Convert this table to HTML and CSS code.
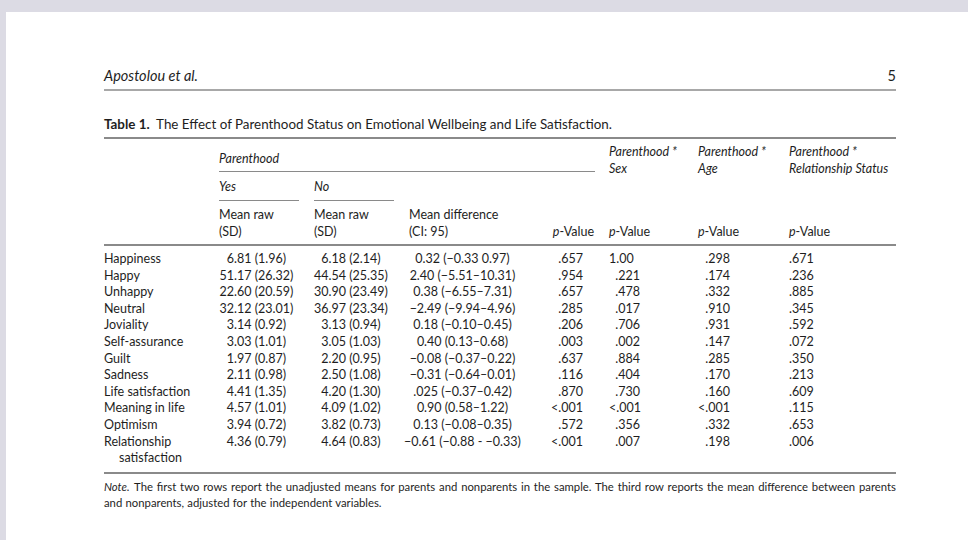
FILE: index.html
```html
<!DOCTYPE html>
<html>
<head>
<meta charset="utf-8">
<link rel="stylesheet" href="styles.css">
</head>
<body>
<div class="page">
  <header class="running">
    <span class="authors">Apostolou et al.</span>
    <span class="folio">5</span>
  </header>
  <div class="caption"><b>Table 1.</b>&nbsp; The Effect of Parenthood Status on Emotional Wellbeing and Life Satisfaction.</div>
  <table class="tbl">
    <colgroup>
      <col class="c1"><col class="c2"><col class="c3"><col class="c4"><col class="c5"><col class="c6"><col class="c7"><col class="c8">
    </colgroup>
    <thead>
      <tr class="h1">
        <th></th>
        <th colspan="4" class="grp"><div class="rule-under w376"><i>Parenthood</i></div></th>
        <th rowspan="2" class="inter"><i>Parenthood *<br>Sex</i></th>
        <th rowspan="2" class="inter"><i>Parenthood *<br>Age</i></th>
        <th rowspan="2" class="inter"><i>Parenthood *<br>Relationship Status</i></th>
      </tr>
      <tr class="h2">
        <th></th>
        <th class="grp"><div class="rule-under w80"><i>Yes</i></div></th>
        <th class="grp"><div class="rule-under w80"><i>No</i></div></th>
        <th></th>
        <th></th>
      </tr>
      <tr class="h3">
        <th></th>
        <th>Mean raw<br>(SD)</th>
        <th>Mean raw<br>(SD)</th>
        <th class="md">Mean difference<br>(CI: 95)</th>
        <th class="pv"><i>p</i>-Value</th>
        <th><i>p</i>-Value</th>
        <th><i>p</i>-Value</th>
        <th><i>p</i>-Value</th>
      </tr>
    </thead>
    <tbody>
      <tr class="first"><td class="lab">Happiness</td><td class="yes">6.81 (1.96)</td><td class="no">6.18 (2.14)</td><td class="dif">0.32 (−0.33 0.97)</td><td class="d5">.657</td><td class="d6 one">1.00</td><td class="d7">.298</td><td class="d8">.671</td></tr>
      <tr><td class="lab">Happy</td><td class="yes">51.17 (26.32)</td><td class="no">44.54 (25.35)</td><td class="dif">2.40 (−5.51–10.31)</td><td class="d5">.954</td><td class="d6">.221</td><td class="d7">.174</td><td class="d8">.236</td></tr>
      <tr><td class="lab">Unhappy</td><td class="yes">22.60 (20.59)</td><td class="no">30.90 (23.49)</td><td class="dif">0.38 (−6.55–7.31)</td><td class="d5">.657</td><td class="d6">.478</td><td class="d7">.332</td><td class="d8">.885</td></tr>
      <tr><td class="lab">Neutral</td><td class="yes">32.12 (23.01)</td><td class="no">36.97 (23.34)</td><td class="dif">−2.49 (−9.94–4.96)</td><td class="d5">.285</td><td class="d6">.017</td><td class="d7">.910</td><td class="d8">.345</td></tr>
      <tr><td class="lab">Joviality</td><td class="yes">3.14 (0.92)</td><td class="no">3.13 (0.94)</td><td class="dif">0.18 (−0.10–0.45)</td><td class="d5">.206</td><td class="d6">.706</td><td class="d7">.931</td><td class="d8">.592</td></tr>
      <tr><td class="lab">Self-assurance</td><td class="yes">3.03 (1.01)</td><td class="no">3.05 (1.03)</td><td class="dif">0.40 (0.13–0.68)</td><td class="d5">.003</td><td class="d6">.002</td><td class="d7">.147</td><td class="d8">.072</td></tr>
      <tr><td class="lab">Guilt</td><td class="yes">1.97 (0.87)</td><td class="no">2.20 (0.95)</td><td class="dif">−0.08 (−0.37–0.22)</td><td class="d5">.637</td><td class="d6">.884</td><td class="d7">.285</td><td class="d8">.350</td></tr>
      <tr><td class="lab">Sadness</td><td class="yes">2.11 (0.98)</td><td class="no">2.50 (1.08)</td><td class="dif">−0.31 (−0.64–0.01)</td><td class="d5">.116</td><td class="d6">.404</td><td class="d7">.170</td><td class="d8">.213</td></tr>
      <tr><td class="lab">Life satisfaction</td><td class="yes">4.41 (1.35)</td><td class="no">4.20 (1.30)</td><td class="dif">.025 (−0.37–0.42)</td><td class="d5">.870</td><td class="d6">.730</td><td class="d7">.160</td><td class="d8">.609</td></tr>
      <tr><td class="lab">Meaning in life</td><td class="yes">4.57 (1.01)</td><td class="no">4.09 (1.02)</td><td class="dif">0.90 (0.58–1.22)</td><td class="d5">&lt;.001</td><td class="d6">&lt;.001</td><td class="d7">&lt;.001</td><td class="d8">.115</td></tr>
      <tr><td class="lab">Optimism</td><td class="yes">3.94 (0.72)</td><td class="no">3.82 (0.73)</td><td class="dif">0.13 (−0.08–0.35)</td><td class="d5">.572</td><td class="d6">.356</td><td class="d7">.332</td><td class="d8">.653</td></tr>
      <tr class="last"><td class="lab hang">Relationship satisfaction</td><td class="yes">4.36 (0.79)</td><td class="no">4.64 (0.83)</td><td class="dif">−0.61 (−0.88 - −0.33)</td><td class="d5">&lt;.001</td><td class="d6">.007</td><td class="d7">.198</td><td class="d8">.006</td></tr>
    </tbody>
  </table>
  <p class="note"><i class="note-lead">Note.</i> The first two rows report the unadjusted means for parents and nonparents in the sample. The third row reports the mean difference between parents and nonparents, adjusted for the independent variables.</p>
</div>
</body>
</html>
```
FILE: styles.css
```css
html, body {
  margin: 0;
  padding: 0;
}
body {
  background: #dcdbe4;
  width: 968px;
  height: 540px;
  overflow: hidden;
}
.page {
  margin: 12px 0 0 6px;
  background: #fff;
  height: 528px;
  padding: 55px 72px 0 98px;
  box-sizing: border-box;
  font-family: "Lato", "Open Sans", sans-serif;
  color: #1e1e1e;
}
.running {
  display: flex;
  justify-content: space-between;
  align-items: flex-end;
  font-size: 14.5px;
  line-height: 18px;
  padding-bottom: 4px;
  border-bottom: 2px solid #a8a8a8;
}
.authors {
  font-style: italic;
}
.caption {
  margin-top: 24px;
  font-size: 13.4px;
  line-height: 18px;
  padding-bottom: 4px;
}
.tbl {
  width: 792px;
  table-layout: fixed;
  border-collapse: collapse;
  font-size: 12.5px;
  border-top: 2px solid #8a8a8a;
  border-bottom: 2px solid #8a8a8a;
}
.c1 { width: 115px; }
.c2 { width: 95px; }
.c3 { width: 81px; }
.c4 { width: 150px; }
.c5 { width: 64px; }
.c6 { width: 89px; }
.c7 { width: 91px; }
.c8 { width: 107px; }
.tbl th {
  font-weight: normal;
  text-align: left;
  padding: 0;
  line-height: 17px;
  vertical-align: top;
  white-space: nowrap;
}
.tbl td {
  padding: 0;
  line-height: 16.6px;
  white-space: nowrap;
  vertical-align: top;
}
.tbl .h1 .grp {
  padding-top: 11px;
}
.h1 .grp .rule-under {
  padding-bottom: 4px;
}
.rule-under {
  border-bottom: 1.5px solid #8a8a8a;
}
.w376 { width: 376px; }
.w80 { width: 80px; }
.tbl .h1 .inter {
  padding-top: 4px;
}
.tbl .h2 .grp {
  padding-top: 6px;
}
.h2 .grp .rule-under {
  padding-bottom: 5px;
}
.tbl .h3 th {
  padding-top: 5px;
  padding-bottom: 4px;
  vertical-align: bottom;
}
.h3 {
  border-bottom: 2px solid #8a8a8a;
}
.tbl .h3 .md {
  padding-left: 14px;
}
.tbl .h3 .pv {
  text-align: right;
  padding-right: 15px;
}
.tbl .first td {
  padding-top: 5px;
}
.tbl .last td {
  padding-bottom: 5px;
}
.lab {
  text-align: left;
}
.tbl td.hang {
  white-space: normal;
  padding-left: 15px;
  text-indent: -15px;
}
.tbl td.yes {
  text-align: center;
  padding-right: 20px;
}
.tbl td.no {
  text-align: center;
  padding-right: 7px;
}
.tbl td.dif {
  text-align: center;
  padding-right: 15px;
}
.tbl td.d5 { text-align: right; padding-right: 26px; }
.tbl td.d6 { text-align: right; padding-right: 58px; }
.tbl td.d6.one { padding-right: 66px; }
.tbl td.d7 { text-align: right; padding-right: 59px; }
.tbl td.d8 { text-align: right; padding-right: 84px; }
.note {
  margin: 5px 0 0;
  font-size: 11.3px;
  line-height: 16px;
  word-spacing: 0.4px;
  text-align: justify;
}
.note-lead {
  padding-right: 1px;
}
```
